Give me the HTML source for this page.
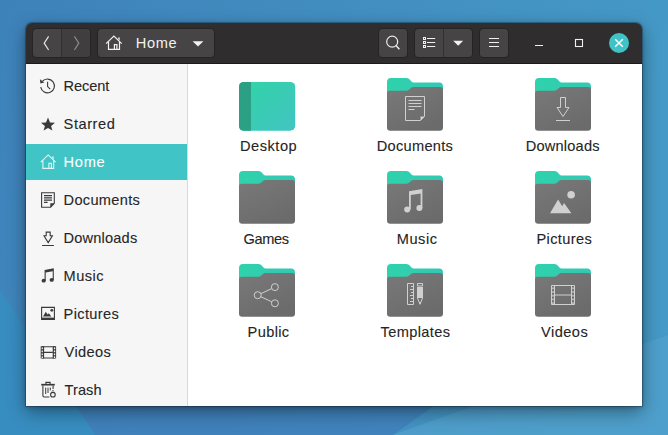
<!DOCTYPE html>
<html>
<head>
<meta charset="utf-8">
<style>
html,body{margin:0;padding:0;}
body{width:668px;height:435px;overflow:hidden;position:relative;font-family:"Liberation Sans",sans-serif;background:#3f86bb;}
#bg{position:absolute;left:0;top:0;width:668px;height:435px;}
#win{position:absolute;left:26px;top:23px;width:616px;height:383px;border-radius:6px 6px 0 0;box-shadow:0 0 0 1px rgba(15,25,45,.30),0 1px 4px rgba(0,0,0,.28),0 6px 18px rgba(0,0,0,.40);overflow:hidden;}
#hdr{position:absolute;left:0;top:0;width:616px;height:39.5px;background:#2f2d2d;border-bottom:1px solid #1c1b1b;}
.btn{position:absolute;top:6px;height:28px;background:#464444;border-radius:3.5px;box-shadow:0 0 0 1px rgba(0,0,0,.2);}
.btn svg{position:absolute;left:0;top:0;}
.sep{position:absolute;top:0;width:1px;height:28px;background:#312f2f;}
#main{position:absolute;left:0;top:40px;width:616px;height:343px;background:#fff;}
#side{position:absolute;left:0;top:40.5px;width:161px;height:343px;background:#f6f6f6;border-right:1px solid #d9d9d9;}
#selrow{position:absolute;left:0;top:121px;width:161px;height:36px;background:#40c4c6;}
.lb{position:absolute;font-size:14.6px;line-height:17px;white-space:nowrap;-webkit-text-stroke:0.1px currentColor;}
.fo{position:absolute;}
#icons{position:absolute;left:0;top:40px;width:161px;height:343px;}
</style>
</head>
<body>
<svg id="bg" viewBox="0 0 668 435" preserveAspectRatio="none">
<defs>
<linearGradient id="bgg" x1="0" y1="0" x2="1" y2="0.15">
<stop offset="0" stop-color="#3e82ba"/><stop offset="1" stop-color="#4599c6"/>
</linearGradient>
</defs>
<rect width="668" height="435" fill="url(#bgg)"/>
<path d="M60 380 L95 435 L393 435 L470 380 Z" fill="#3f7dba" opacity=".75"/>
<path d="M0 290 L95 435 L0 435 Z" fill="#368fc2" opacity=".75"/>
<path d="M393 435 L668 335 L668 435 Z" fill="#57a6cf" opacity=".5"/>
</svg>
<svg width="0" height="0" style="position:absolute">
<defs>
<linearGradient id="teal" x1="0" y1="0" x2="1" y2="0"><stop offset="0" stop-color="#2fd2ab"/><stop offset="1" stop-color="#33c8b4"/></linearGradient>
<linearGradient id="gray" x1="0" y1="0" x2="0.6" y2="1"><stop offset="0" stop-color="#797979"/><stop offset="1" stop-color="#6b6b6b"/></linearGradient>
<linearGradient id="desk" x1="0" y1="0" x2="1" y2="1"><stop offset="0" stop-color="#31d4a6"/><stop offset="1" stop-color="#42c4c2"/></linearGradient>
</defs>
</svg>
<div id="win">
<div id="main"></div>
<div id="side"></div>
<div id="selrow"></div>
<svg id="icons" viewBox="26 63 161 343">
<g fill="none" stroke="#3a3a3a" stroke-width="1.15">
<path d="M42.3 81.4 A6.9 6.9 0 1 1 40.7 87.2"/>
<path d="M47.6 81.8 V86.6 L50.2 89.2" stroke-width="1.1"/>
</g>
<path d="M39.9 79.2 L40.4 83.6 L44.3 82.4 Z" fill="#3a3a3a"/>
<path d="M48 117.4 L50 122.4 L55 122.7 L51.1 126 L52.4 130.4 L48 127.9 L43.6 130.4 L44.9 126 L41 122.7 L46 122.4 Z" fill="#3a3a3a"/>
<g fill="none" stroke="#e4f7f7" stroke-width="1.1">
<path d="M40.8 162.2 L48.2 154.9 L55.6 162.2"/>
<path d="M42.9 160.6 V168.4 H53.7 V160.6"/>
<path d="M48.9 168.4 V163.4 H51.4 V168.4"/>
</g>
<path d="M52.2 156.6 H53.7 V159.3 L52.2 157.9 Z" fill="#e4f7f7"/>
<g fill="none" stroke="#3a3a3a" stroke-width="1.1">
<path d="M41.6 192.8 H54.3 V203.4 L50.6 207.2 H41.6 Z"/>
<path d="M44 195.7 H52 M44 197.9 H52 M44 200.1 H52 M44 202.3 H47.6" stroke-width="1.2"/>
</g>
<path d="M50.3 207.4 V203.2 H54.5 Z" fill="#3a3a3a"/>
<g fill="none" stroke="#3a3a3a" stroke-width="1.1">
<path d="M46.2 232.1 H50.2 V235.8 H52.4 L48.2 242.6 L44 235.8 H46.2 Z"/>
<path d="M42.1 245.5 H53.9" stroke-width="1.2"/>
</g>
<g fill="#3a3a3a">
<ellipse cx="43.7" cy="280.7" rx="2.1" ry="1.9"/><ellipse cx="51.7" cy="279.9" rx="2.1" ry="1.9"/>
<path d="M44.6 280.7 V270 L53.8 268.2 V279.9 H52.7 V271.2 L45.7 272.6 V280.7 Z"/>
</g>
<g fill="none" stroke="#3a3a3a" stroke-width="1.1">
<path d="M41.6 307.4 H54.4 V319.4 H41.6 Z"/>
<path d="M41.6 318.7 H54.4" stroke-width="2.2"/>
</g>
<g fill="#3a3a3a"><circle cx="51.8" cy="310.3" r="1.4"/>
<path d="M43 316.6 L45.8 311.8 L47.6 314.6 L48.8 313.2 L51.4 316.6 Z"/></g>
<g fill="none" stroke="#3a3a3a" stroke-width="1.1">
<path d="M42 346.8 H54.8 M42 358 H54.8 M44 352.4 H52.8"/>
</g>
<path d="M40.7 346.2 H44.1 V358.6 H40.7 Z M52.7 346.2 H56.1 V358.6 H52.7 Z" fill="#3a3a3a"/>
<g fill="#f7f7f7"><rect x="41.6" y="347.5" width="1.3" height="1.7"/><rect x="41.6" y="350.5" width="1.3" height="1.7"/><rect x="41.6" y="353.5" width="1.3" height="1.7"/><rect x="41.6" y="356.4" width="1.3" height="1.7"/><rect x="53.9" y="347.5" width="1.3" height="1.7"/><rect x="53.9" y="350.5" width="1.3" height="1.7"/><rect x="53.9" y="353.5" width="1.3" height="1.7"/><rect x="53.9" y="356.4" width="1.3" height="1.7"/></g>
<g fill="none" stroke="#3a3a3a" stroke-width="1.1">
<path d="M45.9 384 V382.4 H50.1 V384"/>
<path d="M41.2 384.7 H54.8" stroke-width="1.7"/>
<path d="M42.9 385.5 V395.8 Q42.9 397 44.1 397 H49.4"/>
<path d="M53.1 385.5 V389"/>
<path d="M45.7 387.6 V394 M48 387.6 V393 M50.3 387.6 V390.4" stroke-width="1"/>
<circle cx="52.9" cy="394.7" r="2.3" fill="#f7f7f7"/>
<path d="M52 391.4 L52.9 390.3 L53.8 391.4" stroke-width="0.9"/>
</g>
</svg>
<span class="lb" style="left:37.60px;top:55px;letter-spacing:-0.120px;color:#262626;">Recent</span>
<span class="lb" style="left:37.60px;top:93px;letter-spacing:0.550px;color:#262626;">Starred</span>
<span class="lb" style="left:37.60px;top:131px;letter-spacing:0.700px;color:#ffffff;">Home</span>
<span class="lb" style="left:37.60px;top:169px;letter-spacing:0.300px;color:#262626;">Documents</span>
<span class="lb" style="left:37.60px;top:207px;letter-spacing:0.175px;color:#262626;">Downloads</span>
<span class="lb" style="left:37.60px;top:245px;letter-spacing:0.475px;color:#262626;">Music</span>
<span class="lb" style="left:37.60px;top:283px;letter-spacing:0.343px;color:#262626;">Pictures</span>
<span class="lb" style="left:38.60px;top:321px;letter-spacing:0.380px;color:#262626;">Videos</span>
<span class="lb" style="left:38.60px;top:359px;letter-spacing:0.050px;color:#262626;">Trash</span>

<svg class="fo" style="left:212px;top:56.599999999999994px" width="58" height="56" viewBox="-1 -1 58 56"><rect x="0" y="0.9" width="56.2" height="48.9" rx="5" fill="url(#desk)"/><path d="M0 5.9 Q0 0.9 5 0.9 H12 V49.8 H5 Q0 49.8 0 44.8 Z" fill="#2ca085"/></svg>
<span class="lb" style="left:214.00px;top:115px;letter-spacing:0.517px;color:#242424;">Desktop</span>
<svg class="fo" style="left:360px;top:53.599999999999994px" width="58" height="56" viewBox="-1 -1 58 56">
<path d="M0 4.2 Q0 0 4 0 H19.5 Q21.5 0 22.8 1.6 L24.2 3.2 Q25.2 4.4 27 4.4 H52 Q56 4.4 56 8.4 V30 H0 Z" fill="url(#teal)"/>
<path d="M0 15.3 Q0 12.8 2.5 12.8 H19 Q21 12.8 22.3 11.4 L23.6 10.2 Q24.8 9 26.8 9 H53 Q56 9 56 12 V49.6 Q56 52.8 52.8 52.8 H3.2 Q0 52.8 0 49.6 Z" fill="url(#gray)"/>
<g fill="none" stroke="#d0d0d0" stroke-width="1">
<path d="M18.5 18.5 H37.5 V38.5 L33.5 42.5 H18.5 Z"/>
<path d="M21.5 22.5 H34.5 M21.5 25.5 H34.5 M21.5 28.5 H34.5 M21.5 31.5 H27.5" />
</g><path d="M33.5 42.5 V38.5 H37.5 Z" fill="#d0d0d0"/>
</svg>
<span class="lb" style="left:350.80px;top:115px;letter-spacing:0.275px;color:#242424;">Documents</span>
<svg class="fo" style="left:508px;top:53.599999999999994px" width="58" height="56" viewBox="-1 -1 58 56">
<path d="M0 4.2 Q0 0 4 0 H19.5 Q21.5 0 22.8 1.6 L24.2 3.2 Q25.2 4.4 27 4.4 H52 Q56 4.4 56 8.4 V30 H0 Z" fill="url(#teal)"/>
<path d="M0 15.3 Q0 12.8 2.5 12.8 H19 Q21 12.8 22.3 11.4 L23.6 10.2 Q24.8 9 26.8 9 H53 Q56 9 56 12 V49.6 Q56 52.8 52.8 52.8 H3.2 Q0 52.8 0 49.6 Z" fill="url(#gray)"/>
<g fill="none" stroke="#d0d0d0" stroke-width="1">
<path d="M25.5 19.5 H30.5 V29.5 H34 L28 38.5 L22 29.5 H25.5 Z"/>
<path d="M21 42.5 H35"/>
</g>
</svg>
<span class="lb" style="left:499.80px;top:115px;letter-spacing:0.188px;color:#242424;">Downloads</span>
<svg class="fo" style="left:212px;top:146.6px" width="58" height="56" viewBox="-1 -1 58 56">
<path d="M0 4.2 Q0 0 4 0 H19.5 Q21.5 0 22.8 1.6 L24.2 3.2 Q25.2 4.4 27 4.4 H52 Q56 4.4 56 8.4 V30 H0 Z" fill="url(#teal)"/>
<path d="M0 15.3 Q0 12.8 2.5 12.8 H19 Q21 12.8 22.3 11.4 L23.6 10.2 Q24.8 9 26.8 9 H53 Q56 9 56 12 V49.6 Q56 52.8 52.8 52.8 H3.2 Q0 52.8 0 49.6 Z" fill="url(#gray)"/>

</svg>
<span class="lb" style="left:217.50px;top:208px;letter-spacing:-0.375px;color:#242424;">Games</span>
<svg class="fo" style="left:360px;top:146.6px" width="58" height="56" viewBox="-1 -1 58 56">
<path d="M0 4.2 Q0 0 4 0 H19.5 Q21.5 0 22.8 1.6 L24.2 3.2 Q25.2 4.4 27 4.4 H52 Q56 4.4 56 8.4 V30 H0 Z" fill="url(#teal)"/>
<path d="M0 15.3 Q0 12.8 2.5 12.8 H19 Q21 12.8 22.3 11.4 L23.6 10.2 Q24.8 9 26.8 9 H53 Q56 9 56 12 V49.6 Q56 52.8 52.8 52.8 H3.2 Q0 52.8 0 49.6 Z" fill="url(#gray)"/>
<g fill="#d0d0d0">
<circle cx="20.2" cy="38.5" r="3"/><circle cx="32.4" cy="37" r="3"/>
<path d="M22 38.5 V20.3 L35.4 18 V37 H33.6 V22.4 L23.8 24.1 V38.5 Z"/>
</g>
</svg>
<span class="lb" style="left:370.70px;top:208px;letter-spacing:0.550px;color:#242424;">Music</span>
<svg class="fo" style="left:508px;top:146.6px" width="58" height="56" viewBox="-1 -1 58 56">
<path d="M0 4.2 Q0 0 4 0 H19.5 Q21.5 0 22.8 1.6 L24.2 3.2 Q25.2 4.4 27 4.4 H52 Q56 4.4 56 8.4 V30 H0 Z" fill="url(#teal)"/>
<path d="M0 15.3 Q0 12.8 2.5 12.8 H19 Q21 12.8 22.3 11.4 L23.6 10.2 Q24.8 9 26.8 9 H53 Q56 9 56 12 V49.6 Q56 52.8 52.8 52.8 H3.2 Q0 52.8 0 49.6 Z" fill="url(#gray)"/>
<g fill="#d0d0d0">
<circle cx="36.1" cy="23.8" r="3.8"/>
<path d="M15 42.2 L23.1 28.6 L27.2 35.2 L29 32 L36.4 42.2 Z"/>
</g>
</svg>
<span class="lb" style="left:510.50px;top:208px;letter-spacing:0.357px;color:#242424;">Pictures</span>
<svg class="fo" style="left:212px;top:239.60000000000002px" width="58" height="56" viewBox="-1 -1 58 56">
<path d="M0 4.2 Q0 0 4 0 H19.5 Q21.5 0 22.8 1.6 L24.2 3.2 Q25.2 4.4 27 4.4 H52 Q56 4.4 56 8.4 V30 H0 Z" fill="url(#teal)"/>
<path d="M0 15.3 Q0 12.8 2.5 12.8 H19 Q21 12.8 22.3 11.4 L23.6 10.2 Q24.8 9 26.8 9 H53 Q56 9 56 12 V49.6 Q56 52.8 52.8 52.8 H3.2 Q0 52.8 0 49.6 Z" fill="url(#gray)"/>
<g fill="none" stroke="#d0d0d0" stroke-width="1">
<circle cx="18.7" cy="31.2" r="3.5"/><circle cx="35.9" cy="23.1" r="3.5"/><circle cx="35.9" cy="39.3" r="3.5"/>
<path d="M21.9 29.7 L32.7 24.6 M21.9 32.7 L32.7 37.8"/>
</g>
</svg>
<span class="lb" style="left:221.60px;top:301px;letter-spacing:0.360px;color:#242424;">Public</span>
<svg class="fo" style="left:360px;top:239.60000000000002px" width="58" height="56" viewBox="-1 -1 58 56">
<path d="M0 4.2 Q0 0 4 0 H19.5 Q21.5 0 22.8 1.6 L24.2 3.2 Q25.2 4.4 27 4.4 H52 Q56 4.4 56 8.4 V30 H0 Z" fill="url(#teal)"/>
<path d="M0 15.3 Q0 12.8 2.5 12.8 H19 Q21 12.8 22.3 11.4 L23.6 10.2 Q24.8 9 26.8 9 H53 Q56 9 56 12 V49.6 Q56 52.8 52.8 52.8 H3.2 Q0 52.8 0 49.6 Z" fill="url(#gray)"/>
<g fill="none" stroke="#d0d0d0" stroke-width="1">
<path d="M20.5 19.5 H26.5 V40.5 H20.5 Z"/>
<path d="M24 22.5 H26.5 M23 25.5 H26.5 M24 28.5 H26.5 M23 31.5 H26.5 M24 34.5 H26.5 M23 37.5 H26.5"/>
<path d="M30.5 34 L33 40.3 L35.5 34"/>
<path d="M30.5 19.5 H35.5 V22 H30.5 Z"/>
</g><path d="M30 23 H36 V34 H30 Z" fill="#d0d0d0"/><path d="M32 38 L33 40.5 L34 38 Z" fill="#d0d0d0"/>
</svg>
<span class="lb" style="left:354.50px;top:301px;letter-spacing:0.375px;color:#242424;">Templates</span>
<svg class="fo" style="left:508px;top:239.60000000000002px" width="58" height="56" viewBox="-1 -1 58 56">
<path d="M0 4.2 Q0 0 4 0 H19.5 Q21.5 0 22.8 1.6 L24.2 3.2 Q25.2 4.4 27 4.4 H52 Q56 4.4 56 8.4 V30 H0 Z" fill="url(#teal)"/>
<path d="M0 15.3 Q0 12.8 2.5 12.8 H19 Q21 12.8 22.3 11.4 L23.6 10.2 Q24.8 9 26.8 9 H53 Q56 9 56 12 V49.6 Q56 52.8 52.8 52.8 H3.2 Q0 52.8 0 49.6 Z" fill="url(#gray)"/>
<g fill="none" stroke="#d0d0d0" stroke-width="1">
<path d="M16.5 21.5 H39.5 V40.5 H16.5 Z M19.5 21.5 V40.5 M36.5 21.5 V40.5 M19.5 31 H36.5"/>
</g><g fill="#d0d0d0"><rect x="17.3" y="23.4" width="1.4" height="1.8"/><rect x="17.3" y="27.1" width="1.4" height="1.8"/><rect x="17.3" y="30.8" width="1.4" height="1.8"/><rect x="17.3" y="34.5" width="1.4" height="1.8"/><rect x="17.3" y="38.2" width="1.4" height="1.8"/><rect x="37.3" y="23.4" width="1.4" height="1.8"/><rect x="37.3" y="27.1" width="1.4" height="1.8"/><rect x="37.3" y="30.8" width="1.4" height="1.8"/><rect x="37.3" y="34.5" width="1.4" height="1.8"/><rect x="37.3" y="38.2" width="1.4" height="1.8"/></g>
</svg>
<span class="lb" style="left:515.00px;top:301px;letter-spacing:0.480px;color:#242424;">Videos</span>

<div id="hdr">
<div class="btn" style="left:7px;width:57px;"><div style="position:absolute;left:29px;top:0;width:28px;height:28px;background:#403e3e;border-radius:0 3.5px 3.5px 0"></div><div class="sep" style="left:28px"></div>
<svg width="57" height="28" viewBox="0 0 57 28"><path d="M15.6 7.4 L11.2 14.2 L15.6 21" fill="none" stroke="#e6e6e6" stroke-width="1.2"/><path d="M41.4 7.4 L45.8 14.2 L41.4 21" fill="none" stroke="#8c8a8a" stroke-width="1.2"/></svg></div>
<div class="btn" style="left:72px;width:116px;">
<svg width="116" height="28" viewBox="0 0 116 28"><g fill="none" stroke="#f2f2f2" stroke-width="1.2"><path d="M8.1 14.6 L15.9 7 L23.7 14.6"/><path d="M10.5 12.8 V20.4 H21.5 V12.8"/><path d="M16.4 20.4 V15.6 H18.9 V20.4"/></g><path d="M20.2 8.4 H21.7 V11.4 L20.2 10 Z" fill="#f2f2f2"/><path d="M94.6 12.2 H105.4 L100 17.6 Z" fill="#f2f2f2"/></svg>
</div>
<span class="lb" style="left:109.80px;top:12px;letter-spacing:0.633px;color:#f2f2f2;-webkit-text-stroke:0">Home</span>
<div class="btn" style="left:353px;width:28px;"><svg width="28" height="28" viewBox="0 0 28 28"><circle cx="13.2" cy="12.7" r="5.5" fill="none" stroke="#ececec" stroke-width="1.2"/><path d="M17 16.6 L20.4 20.2" stroke="#ececec" stroke-width="1.5"/></svg></div>
<div class="btn" style="left:389px;width:57px;"><div class="sep" style="left:28px"></div>
<svg width="57" height="28" viewBox="0 0 57 28"><g fill="none" stroke="#f0f0f0" stroke-width="1"><rect x="8.5" y="8.5" width="2" height="2"/><rect x="8.5" y="12.5" width="2" height="2"/><rect x="8.5" y="16.5" width="2" height="2"/><path d="M12 9.5 H20.2 M12 13.5 H20.2 M12 17.5 H20.2" stroke-width="1.1"/></g><path d="M38.2 11.8 H48.2 L43.2 16.8 Z" fill="#f2f2f2"/></svg></div>
<div class="btn" style="left:454px;width:28px;"><svg width="28" height="28" viewBox="0 0 28 28"><path d="M9 9.5 H19 M9 13.5 H19 M9 17.5 H19" stroke="#f0f0f0" stroke-width="1.1"/></svg></div>
<svg style="position:absolute;left:500px;top:0" width="116" height="40" viewBox="0 0 116 40"><path d="M9 22.5 H17" stroke="#f0f0f0" stroke-width="1.2"/><rect x="49.5" y="16.5" width="7" height="7" fill="none" stroke="#f0f0f0" stroke-width="1.1"/><circle cx="93" cy="20" r="10" fill="#3fc3c6"/><path d="M89.2 16.2 L96.8 23.8 M96.8 16.2 L89.2 23.8" stroke="#fff" stroke-width="1.4"/></svg>
</div>
</div>
</body>
</html>
